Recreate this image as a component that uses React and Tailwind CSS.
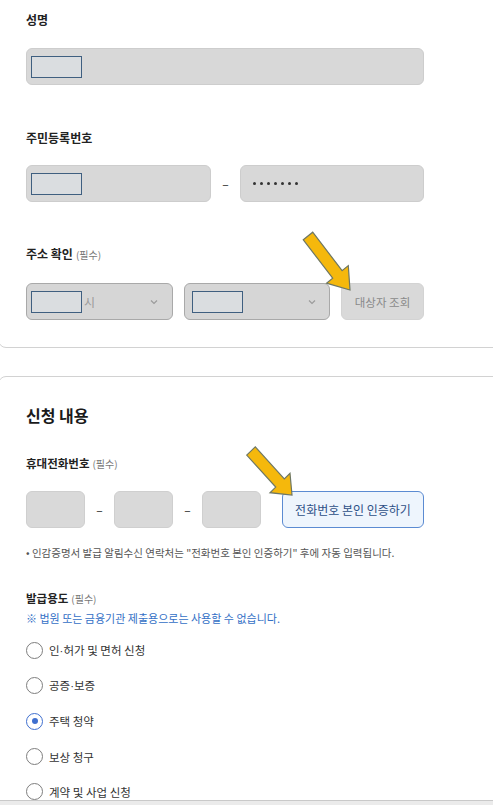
import React from "react";

const Chevron = () => (
  <svg width="8" height="6" viewBox="0 0 8 6" className="shrink-0">
    <polyline points="1,1.5 4,4.5 7,1.5" fill="none" stroke="#9a9a9a" strokeWidth="1.1" />
  </svg>
);

const Blank = () => (
  <div className="w-[51px] h-[22px] border border-[#3f5f80] bg-[#dadde0] shrink-0" />
);

const Dot = () => <span className="font-['Liberation_Sans',sans-serif]">·</span>;

const Radio = ({ label, checked }) => (
  <div className="flex items-center h-[35.3px]">
    {checked ? (
      <div className="w-[17px] h-[17px] rounded-full border-[1.5px] border-[#3f6fcf] flex items-center justify-center shrink-0">
        <div className="w-[6px] h-[6px] rounded-full bg-[#3f6fcf]" />
      </div>
    ) : (
      <div className="w-[17px] h-[17px] rounded-full border-[1.5px] border-[#7e7e7e] shrink-0" />
    )}
    <span className="ml-[6px] text-[11.5px] leading-[16px] text-[#333]">{label}</span>
  </div>
);

export default function App() {
  return (
    <div className="relative w-[493px] h-[805px] overflow-hidden bg-white font-['Noto_Sans_CJK_KR','Noto_Sans',sans-serif] text-[#222]">
      {/* Card 1 */}
      <div className="-mt-[10px] -ml-[2px] w-[540px] rounded-[8px] border border-[#d2d2d2] pl-[27px] pt-[21px] pb-[27px]">
        <div className="w-[398px]">
          <div className="text-[12px] leading-[16px] font-bold">성명</div>
          <div className="mt-[20px] h-[37px] rounded-[6px] border border-[#cdcdcd] bg-[#d8d8d8] flex items-center pl-[4px]">
            <Blank />
          </div>

          <div className="mt-[45px] text-[12px] leading-[16px] font-bold">주민등록번호</div>
          <div className="mt-[19px] flex items-center">
            <div className="w-[185px] h-[37px] rounded-[6px] border border-[#cdcdcd] bg-[#d8d8d8] flex items-center pl-[4px]">
              <Blank />
            </div>
            <div className="w-[29px] text-center text-[12px] leading-[16px] text-[#222]">–</div>
            <div className="flex-1 h-[37px] rounded-[6px] border border-[#cdcdcd] bg-[#d8d8d8] flex items-center pl-[12px] gap-[4px]">
              <div className="w-[3px] h-[3px] rounded-full bg-[#333]" />
              <div className="w-[3px] h-[3px] rounded-full bg-[#333]" />
              <div className="w-[3px] h-[3px] rounded-full bg-[#333]" />
              <div className="w-[3px] h-[3px] rounded-full bg-[#333]" />
              <div className="w-[3px] h-[3px] rounded-full bg-[#333]" />
              <div className="w-[3px] h-[3px] rounded-full bg-[#333]" />
              <div className="w-[3px] h-[3px] rounded-full bg-[#333]" />
            </div>
          </div>

          <div className="mt-[44px] flex items-baseline">
            <span className="text-[12px] leading-[16px] font-bold">주소 확인</span>
            <span className="ml-[3px] text-[10px] leading-[16px] text-[#777]">(필수)</span>
          </div>
          <div className="mt-[20px] flex items-center gap-[11px]">
            <div className="w-[147px] h-[37px] rounded-[6px] border border-[#a9a9a9] bg-[#d6d6d6] flex items-center pl-[4px] pr-[14px]">
              <Blank />
              <span className="ml-[2px] text-[12px] text-[#9a9a9a] leading-[16px]">시</span>
              <div className="flex-1" />
              <Chevron />
            </div>
            <div className="w-[146px] h-[37px] rounded-[6px] border border-[#a9a9a9] bg-[#d6d6d6] flex items-center pl-[7px] pr-[13px]">
              <Blank />
              <div className="flex-1" />
              <Chevron />
            </div>
            <div className="flex-1 h-[37px] rounded-[6px] border border-[#d3d3d3] bg-[#d9d9d9] flex items-center justify-center text-[11.5px] leading-[16px] text-[#8a8a8a]">
              대상자 조회
            </div>
          </div>
        </div>
      </div>

      {/* Card 2 */}
      <div className="mt-[28px] -ml-[2px] w-[540px] rounded-[8px] border border-[#d2d2d2] pl-[27px] pt-[28px] pb-[40px]">
        <div className="w-[398px]">
          <div className="text-[16px] leading-[20px] font-bold text-[#1a1a1a]">신청 내용</div>

          <div className="mt-[30px] flex items-baseline">
            <span className="text-[11.5px] leading-[16px] font-bold">휴대전화번호</span>
            <span className="ml-[3px] text-[10px] leading-[16px] text-[#777]">(필수)</span>
          </div>
          <div className="mt-[19px] flex items-center">
            <div className="w-[59px] h-[37px] rounded-[6px] border border-[#cfcfcf] bg-[#d9d9d9]" />
            <div className="w-[29px] text-center text-[12px] leading-[16px]">–</div>
            <div className="w-[59px] h-[37px] rounded-[6px] border border-[#cfcfcf] bg-[#d9d9d9]" />
            <div className="w-[29px] text-center text-[12px] leading-[16px]">–</div>
            <div className="w-[59px] h-[37px] rounded-[6px] border border-[#cfcfcf] bg-[#d9d9d9]" />
            <div className="ml-[21px] w-[142px] h-[37px] rounded-[6px] border border-[#5b8bd2] bg-[#eef5fd] flex items-center justify-center text-[12px] leading-[16px] text-[#2d4f86]">
              전화번호 본인 인증하기
            </div>
          </div>
          <div className="mt-[18px] text-[10.5px] leading-[14px] text-[#555] whitespace-nowrap">
            • 인감증명서 발급 알림수신 연락처는 "전화번호 본인 인증하기" 후에 자동 입력됩니다.
          </div>

          <div className="mt-[30px] flex items-baseline">
            <span className="text-[11.5px] leading-[16px] font-bold">발급용도</span>
            <span className="ml-[3px] text-[10px] leading-[16px] text-[#777]">(필수)</span>
          </div>
          <div className="mt-[4px] text-[11px] leading-[14px] text-[#3370c6] whitespace-nowrap">
            ※ 법원 또는 금융기관 제출용으로는 사용할 수 없습니다.
          </div>
          <div className="mt-[8px] flex flex-col">
            <Radio label={<>인<Dot />허가 및 면허 신청</>} />
            <Radio label={<>공증<Dot />보증</>} />
            <Radio label="주택 청약" checked />
            <Radio label="보상 청구" />
            <Radio label="계약 및 사업 신청" />
          </div>
        </div>
      </div>

      {/* Arrows (overlays) */}
      <svg className="absolute left-0 top-0 pointer-events-none" width="493" height="805" viewBox="0 0 493 805">
        <polygon
          points="303.3,239.8 312.7,232.2 342.1,270.6 348.3,265.6 350,290 326.5,283.2 332.7,278.2"
          fill="#f5b80c"
          stroke="#6e7763"
          strokeWidth="1.2"
        />
        <polygon
          points="246.7,455.1 255.3,446.9 284.3,478.9 290,473.3 292,495 270,492.7 275.7,487.1"
          fill="#f5b80c"
          stroke="#6e7763"
          strokeWidth="1.2"
        />
      </svg>

      {/* Bottom strip */}
      <div className="absolute left-0 right-0 bottom-0 h-[5px] bg-[#ebebeb] border-t border-[#c9c9c9]" />
    </div>
  );
}
